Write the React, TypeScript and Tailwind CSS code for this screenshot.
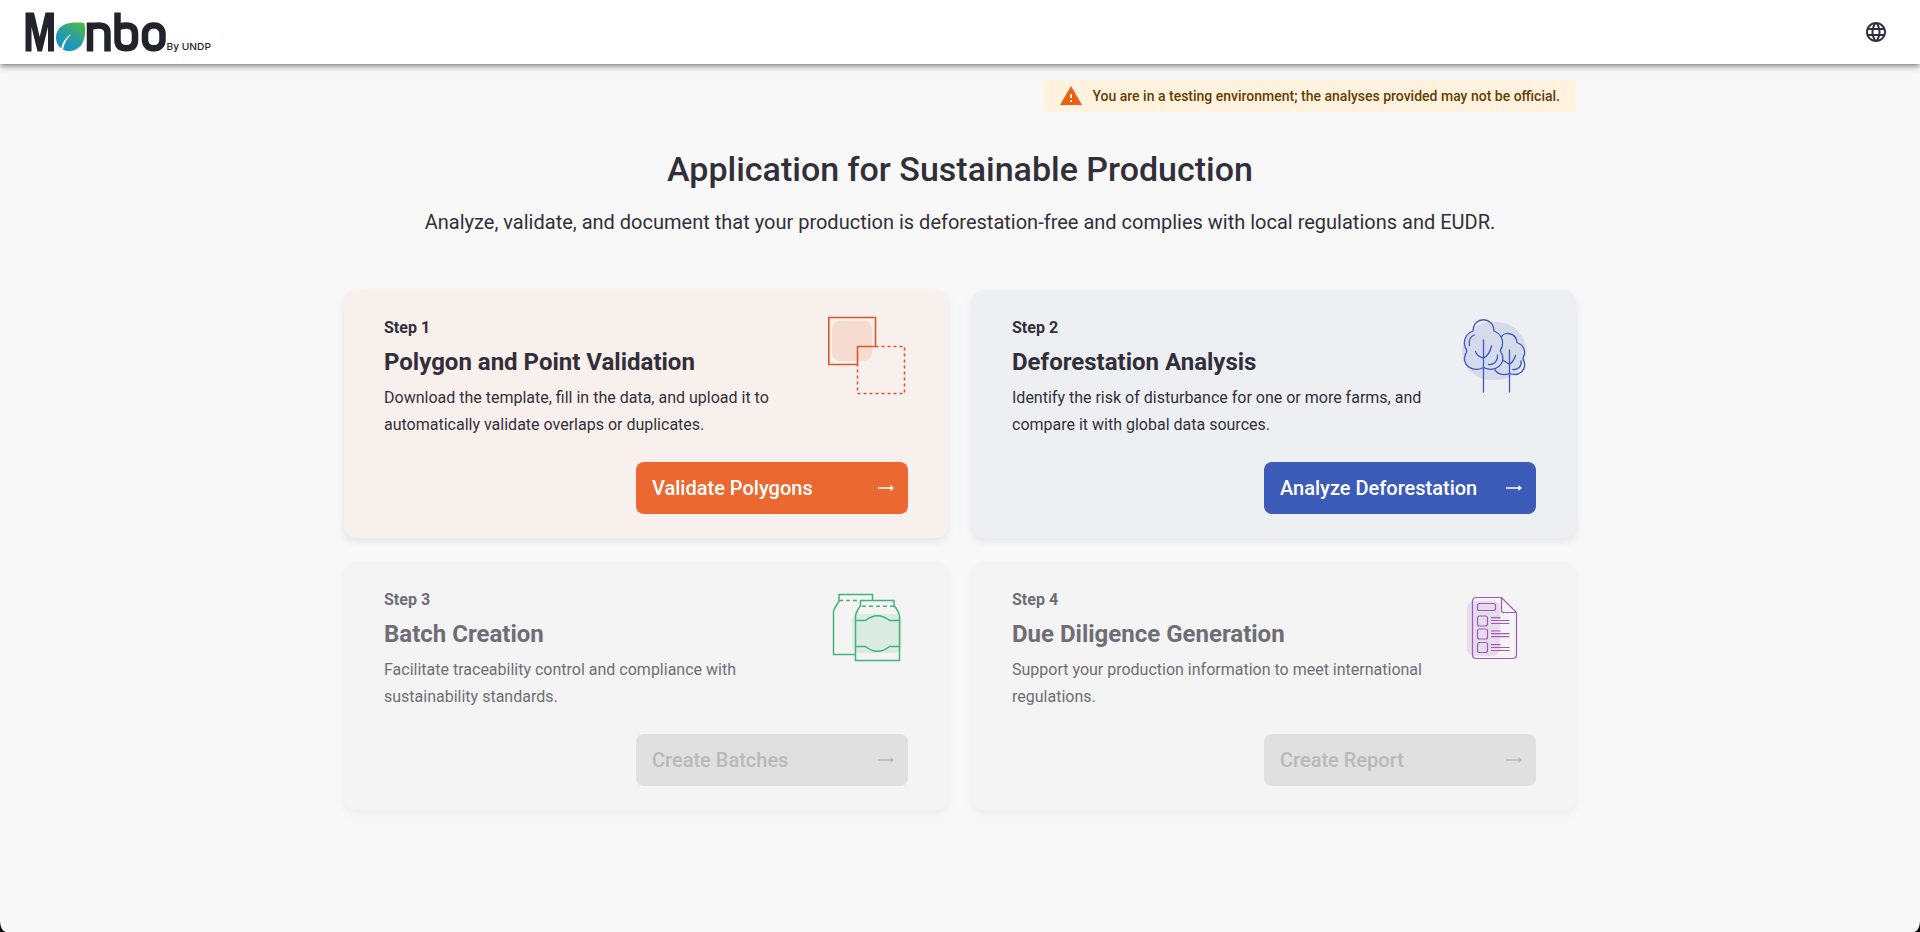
import React from "react";

const FONT = "font-[Roboto,'Liberation_Sans',sans-serif]";

function Logo() {
  return (
    <svg width="190" height="44" viewBox="24 10 190 44" role="img" aria-label="Monbo by UNDP">
      <defs>
        <linearGradient id="leaf" x1="0.2" y1="1" x2="0.85" y2="0">
          <stop offset="0" stopColor="#1390d0" />
          <stop offset="0.5" stopColor="#2a9fa0" />
          <stop offset="1" stopColor="#4db848" />
        </linearGradient>
      </defs>
      <path fill="#23232b" d="M25.500 51.500V12.500H34L39.700 37L45.500 12.500H54V51.500H48V27L42 51.500H37.500L31.500 27V51.500Z" />
      <path fill="url(#leaf)" d="M84.500 23.500C85.700 30 85.500 38 82 44C78 50.500 69 53 63 49.800C64 44.500 66 39.500 71.500 34C65.500 37.500 62.500 42 61.300 48.500C56 44.500 54.500 37 57.500 31C61 24.500 68 22.500 76 22.500Q83.500 22 84.500 23.500Z" />
      <g fill="none" stroke="#23232b" strokeWidth="6.500">
        <path d="M90 51.500V22.500M90 29Q91.500 25.500 98.500 25.500Q107.500 25.500 107.500 33V51.500" />
        <path d="M117.500 12.500V40Q117.500 48.300 126.300 48.300Q135 48.300 135 40V34Q135 25.500 126.300 25.500Q119.500 25.500 117.500 29" />
        <rect x="145" y="25.500" width="17.500" height="22.800" rx="8" />
      </g>
      <text x="166.500" y="49.500" fontSize="9.600" fontFamily="Inter, sans-serif" fontWeight="500" fill="#23232b" textLength="44.500" lengthAdjust="spacingAndGlyphs">By UNDP</text>
    </svg>
  );
}

function PolygonIcon() {
  return (
    <svg width="80" height="80" viewBox="0 0 80 80" fill="none">
      <rect x="4" y="5" width="40" height="40" rx="8" fill="#f5dbd0" />
      <g stroke="#d9592b" strokeWidth="1.600">
        <path d="M29.500 48.500H.8V1.500H47.500V30.500H29.500Z" />
        <path strokeDasharray="3 3" d="M47.500 30.500H76.500V77.500H29.500V48" />
      </g>
    </svg>
  );
}

function TreesIcon() {
  return (
    <svg width="80" height="80" viewBox="-2 0 80 80" fill="none">
      <rect x="4" y="6" width="64" height="58" rx="29" fill="#d5daec" />
      <g stroke="#3c5ab8" strokeWidth="1.300" strokeLinecap="round">
        <path d="M25.500 51.500C15 57 3 49 7.500 38Q10 35 7.500 32C4.500 25 8 17.500 15 15C15.500 0 35.500 0 36 15C42 17.500 46 23 44 31Q41 35 44 38C47.500 48 38 57 25.500 51.500" />
        <path d="M43.500 21C46 15.500 58 16 59 26.500C65.500 29 68.500 35 65.500 41Q64.500 43 66 45C69 54 61 61 51.500 57.500C45 60.500 38 57 37 53.500" />
        <path d="M25.500 24V76M25.500 42Q31.500 39 33.500 30M25.500 42Q19.500 41 17.500 35.500M51.500 34V76M51.500 48.500Q56 45 57.500 39.500M51.500 48.500L45.500 44.500M11.500 29.500C10.500 24 12 20.500 16.500 19M30.500 48.500C37 49 40 44 39.500 39M55 53.500C60.500 54 64 50 63 45" />
      </g>
    </svg>
  );
}

function BagsIcon() {
  return (
    <svg width="80" height="80" viewBox="0 0 80 80" fill="none">
      <rect x="24" y="26" width="50" height="39" rx="7" fill="#dbeae3" />
      <g stroke="#42b27a" strokeWidth="1.500">
        <path d="M27 66.500H5.500V24Q5.500 21 11 13.500V6.500H44.500V12.500" />
        <path d="M27.500 72.500H71.500V29Q71.500 24 66 17.500V12.500H32.500V17.500Q27.500 25 27.500 28Z" />
        <path d="M27.500 32.500H37.500Q49.500 23 61.500 32.500H71.500M27.500 58.500H37.500Q49.500 68 61.500 58.500H71.500" />
        <path strokeDasharray="4 3" d="M11 12.500H32M34 18.300H66" />
      </g>
    </svg>
  );
}

function ReportIcon() {
  return (
    <svg width="80" height="80" viewBox="-2 0 80 80" fill="none">
      <rect x="9" y="13" width="33" height="55" rx="7" fill="#e6dcea" />
      <g stroke="#a05abc" strokeWidth="1.200">
        <path d="M18 9.500H43.500L58.500 24.500V66.500Q58.500 70.500 54.500 70.500H18.500Q14.500 70.500 14.500 66.500V13.500Q14.500 9.500 18.500 9.500M43.500 9.500V22.500Q43.500 24.500 45.500 24.500H58.500" />
        <rect x="19.500" y="15.500" width="18" height="7" rx="2" />
        <rect x="19.500" y="28" width="10" height="10" rx="2" />
        <rect x="19.500" y="41" width="10" height="10" rx="2" />
        <rect x="19.500" y="54.500" width="10" height="10" rx="2" />
        <path d="M33 29.700H42.500M33 32.500H51.500M33 35.500H51.500M33 43H42.500M33 45.700H51.500M33 48.700H51.500M33 56.700H42.500M33 59.500H51.500M33 62.500H51.500" />
      </g>
    </svg>
  );
}

function Arrow() {
  return (
    <svg width="16" height="8" viewBox="0 0 16 8" fill="currentColor">
      <path d="M0 3.200H12.500V1L16 4L12.500 7V4.800H0Z" />
    </svg>
  );
}

interface StepProps {
  step: string;
  title: string;
  text: string;
  action: string;
  card: string;
  button: string;
  disabled?: boolean;
  icon: React.ReactNode;
}

function StepCard({ step, title, text, action, card, button, disabled, icon }: StepProps) {
  return (
    <section className={`flex h-[248px] flex-col justify-between rounded-xl px-10 pt-6 pb-6 ${card}`}>
      <div className="flex justify-between">
        <div className={`w-[412px] ${disabled ? "text-[#6f6d75]" : "text-[#322f3b]"}`}>
          <p className="mt-[1px] text-base leading-[26px] font-bold">{step}</p>
          <h2 className="mt-[5px] text-2xl leading-8 font-bold">{title}</h2>
          <p className="mt-[6px] text-base leading-[27px]">{text}</p>
        </div>
        <div className="mt-[2px] h-20 w-20 shrink-0">{icon}</div>
      </div>
      <button
        disabled={disabled}
        className={`flex h-[52px] w-[272px] shrink-0 items-center justify-between self-end rounded-lg pr-[14px] pl-4 text-xl font-medium ${button}`}
      >
        {action}
        <Arrow />
      </button>
    </section>
  );
}

export default function App() {
  return (
    <div className="bg-black">
      <div className={`flex h-[932px] flex-col overflow-hidden bg-[#f8f8f8] [border-radius:0_0_6px_6px/0_0_11px_11px] ${FONT}`}>
        <header className="z-10 flex h-16 shrink-0 items-center justify-between bg-white pr-[34px] pl-6 shadow-[0_2px_4px_-1px_rgba(0,0,0,0.3),0_4px_5px_0_rgba(0,0,0,0.17),0_1px_10px_0_rgba(0,0,0,0.12)]">
          <Logo />
          <svg width="20" height="20" viewBox="2 2 20 20" fill="#322f3b">
            <path d="M11.990 2C6.470 2 2 6.480 2 12s4.470 10 9.990 10C17.520 22 22 17.520 22 12S17.520 2 11.990 2m6.930 6h-2.950c-.32-1.250-.78-2.450-1.380-3.560 1.840.63 3.370 1.910 4.330 3.560M12 4.040c.83 1.200 1.480 2.530 1.910 3.960h-3.820c.43-1.430 1.080-2.760 1.910-3.960M4.260 14C4.100 13.360 4 12.690 4 12s.1-1.360.26-2h3.380c-.08.66-.14 1.320-.14 2s.06 1.340.14 2zm.82 2h2.950c.32 1.250.78 2.450 1.380 3.560-1.840-.63-3.370-1.900-4.330-3.560m2.950-8H5.080c.96-1.660 2.490-2.930 4.330-3.560C8.810 5.550 8.350 6.750 8.030 8M12 19.960c-.83-1.200-1.480-2.530-1.910-3.960h3.820c-.43 1.430-1.080 2.760-1.910 3.960M14.340 14H9.660c-.09-.66-.16-1.320-.16-2s.07-1.350.16-2h4.680c.09.65.16 1.320.16 2s-.07 1.340-.16 2m.25 5.560c.6-1.110 1.060-2.310 1.380-3.560h2.950c-.96 1.650-2.490 2.930-4.330 3.560M16.360 14c.08-.66.14-1.320.14-2s-.06-1.340-.14-2h3.380c.16.64.26 1.310.26 2s-.1 1.360-.26 2z" />
          </svg>
        </header>
        <main className="mx-auto flex w-[1232px] flex-col pt-4">
          <div className="flex h-8 items-center gap-[10px] self-end rounded bg-[#fff3e0] pr-4 pl-[17px] text-[14px] font-medium text-[#663c00]">
            <svg className="-mt-px" width="22" height="19" viewBox="1 2 22 19" fill="#ed6013">
              <path d="M1 21h22L12 2zm12-3h-2v-2h2zm0-4h-2v-4h2z" />
            </svg>
            You are in a testing environment; the analyses provided may not be official.
          </div>
          <h1 className="mt-9 text-center text-[34px] leading-[42px] font-medium text-[#322f3b]">
            Application for Sustainable Production
          </h1>
          <p className="mt-4 text-center text-xl leading-8 text-[#322f3b]">
            Analyze, validate, and document that your production is deforestation-free and complies with local regulations and EUDR.
          </p>
          <div className="mt-[52px] grid grid-cols-2 gap-6">
            <StepCard
              step="Step 1"
              title="Polygon and Point Validation"
              text="Download the template, fill in the data, and upload it to automatically validate overlaps or duplicates."
              action="Validate Polygons"
              card="bg-[#f8f0ed] shadow-[0_4px_8px_rgba(0,0,0,0.08)]"
              button="bg-[#eb6831] text-white"
              icon={<PolygonIcon />}
            />
            <StepCard
              step="Step 2"
              title="Deforestation Analysis"
              text="Identify the risk of disturbance for one or more farms, and compare it with global data sources."
              action="Analyze Deforestation"
              card="bg-[#eeeff3] shadow-[0_4px_8px_rgba(0,0,0,0.08)]"
              button="bg-[#3c5ab8] text-white"
              icon={<TreesIcon />}
            />
            <StepCard
              step="Step 3"
              title="Batch Creation"
              text="Facilitate traceability control and compliance with sustainability standards."
              action="Create Batches"
              card="bg-[#f4f4f4] shadow-[0_4px_8px_rgba(0,0,0,0.05)]"
              button="bg-[#e0e0e0] text-[#b9b9b9]"
              disabled
              icon={<BagsIcon />}
            />
            <StepCard
              step="Step 4"
              title="Due Diligence Generation"
              text="Support your production information to meet international regulations."
              action="Create Report"
              card="bg-[#f4f4f4] shadow-[0_4px_8px_rgba(0,0,0,0.05)]"
              button="bg-[#e0e0e0] text-[#b9b9b9]"
              disabled
              icon={<ReportIcon />}
            />
          </div>
        </main>
      </div>
    </div>
  );
}
